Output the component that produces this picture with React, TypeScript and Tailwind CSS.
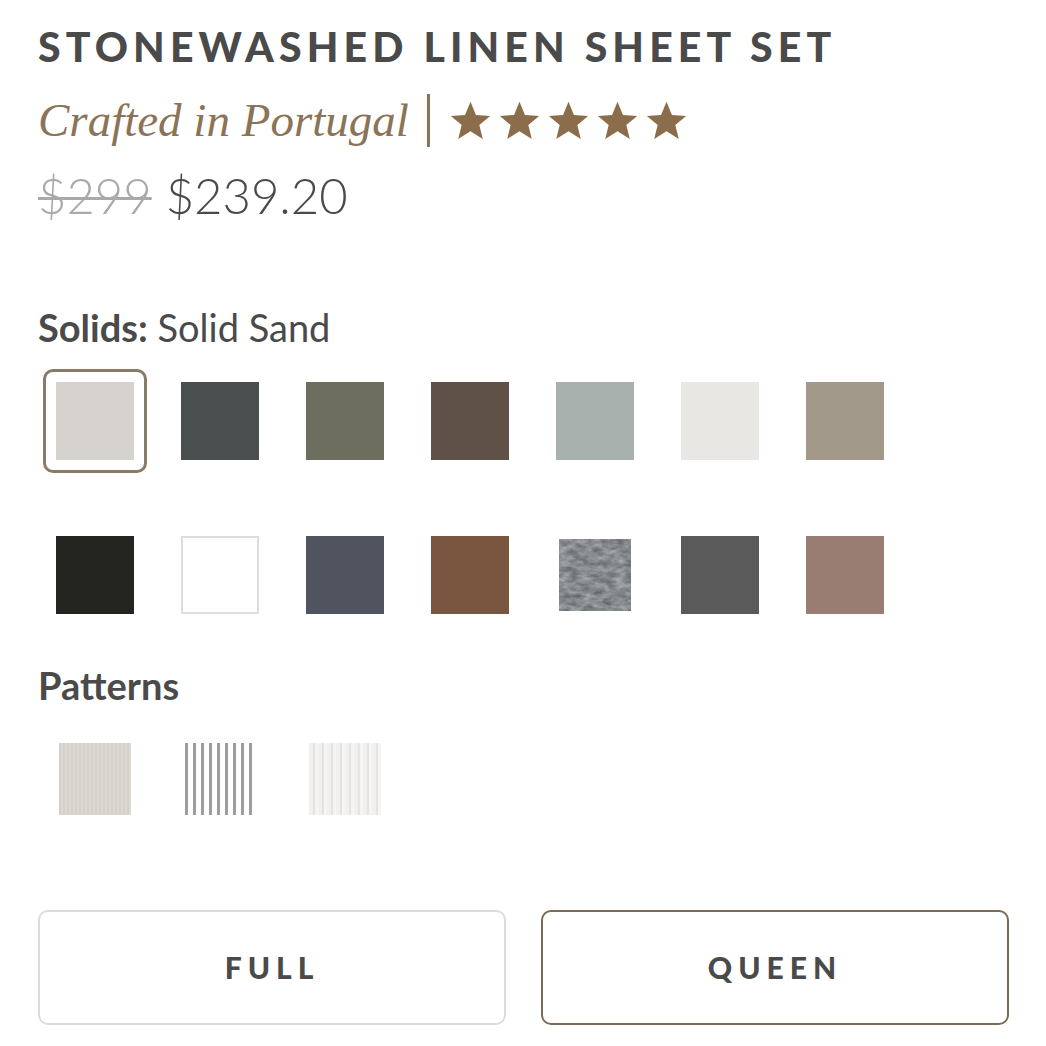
import React from "react";

const Star = () => (
  <svg width="41" height="39" viewBox="0 0 24 23" className="shrink-0">
    <path d="M12 0.5l3.2 7.7 8.4.6-6.4 5.4 2.05 8.2L12 17.9l-7.25 4.5 2.05-8.2L0.4 8.8l8.4-.6z" fill="#8b6d4b" />
  </svg>
);

const row1 = ["#d6d2cd", "#4a5050", "#6e6e5e", "#5f5048", "#a9b1af", "#e9e7e3", "#a3998a"];
const row2 = ["#23241f", "white", "#50545f", "#7a5540", "heather", "#5a5a5a", "#9a7d72"];

const Heather = () => (
  <svg width="72" height="72" viewBox="0 0 72 72">
    <filter id="noise" x="0" y="0" width="100%" height="100%" colorInterpolationFilters="sRGB">
      <feTurbulence type="fractalNoise" baseFrequency="0.09 0.18" numOctaves="4" seed="7" />
      <feColorMatrix
        type="matrix"
        values="0.45 0 0 0 0.3  0.45 0 0 0 0.315  0.45 0 0 0 0.33  0 0 0 0 1"
      />
    </filter>
    <rect width="72" height="72" filter="url(#noise)" />
  </svg>
);

function Swatch({ c, selected }: { c: string; selected?: boolean }) {
  let inner: React.ReactNode;
  if (c === "white") {
    inner = <div className="w-[78px] h-[78px] bg-white border-2 border-[#dddddd]" />;
  } else if (c === "heather") {
    inner = (
      <div className="w-[78px] h-[78px] flex items-center justify-center">
        <Heather />
      </div>
    );
  } else {
    inner = <div className="w-[78px] h-[78px]" style={{ backgroundColor: c }} />;
  }
  return (
    <div
      className={
        "w-[104px] h-[104px] flex items-center justify-center rounded-[10px] border-[3px] " +
        (selected ? "border-[#8a7a66]" : "border-transparent")
      }
    >
      {inner}
    </div>
  );
}

export default function App() {
  return (
    <div
      className="w-[1046px] h-[1046px] bg-white overflow-hidden pl-[38px] pt-[22px]"
      style={{ fontFamily: "Lato, 'Noto Sans', sans-serif" }}
    >
      <h1 className="text-[41px] leading-[50px] font-black tracking-[0.125em] text-[#4a4a4a] whitespace-nowrap">
        STONEWASHED LINEN SHEET SET
      </h1>
      <div className="flex items-center h-[60px] mt-[18px]">
        <span
          className="italic text-[47px] leading-[60px] text-[#8b7357]"
          style={{ fontFamily: "'Liberation Serif', serif" }}
        >
          Crafted in Portugal
        </span>
        <div className="w-[3px] h-[53px] bg-[#8b7357] ml-[18px] mr-[20px]" />
        <div className="flex gap-[8px]">
          <Star />
          <Star />
          <Star />
          <Star />
          <Star />
        </div>
      </div>
      <div className="flex items-baseline gap-[14px] mt-[15px] font-light text-[49px] leading-[60px]">
        <span className="text-[#a9a9a9] line-through decoration-[3px]">$299</span>
        <span className="text-[#4a4a4a]">$239.20</span>
      </div>
      <div className="mt-[80px] text-[38px] leading-[44px] text-[#4a4a4a]">
        <span className="font-bold">Solids:</span> <span className="font-normal">Solid Sand</span>
      </div>
      <div className="mt-[20px] -ml-[33px] flex flex-col gap-[50px]">
        <div className="flex gap-[21px] ml-[38px]">
          {row1.map((c, i) => (
            <Swatch key={i} c={c} selected={i === 0} />
          ))}
        </div>
        <div className="flex gap-[21px] ml-[38px]">
          {row2.map((c, i) => (
            <Swatch key={i} c={c} />
          ))}
        </div>
      </div>
      <div className="mt-[36px] text-[38px] leading-[44px] font-bold text-[#4a4a4a]">Patterns</div>
      <div className="mt-[36px] flex gap-[53px] ml-[21px]">
        <div className="w-[72px] h-[72px] bg-[#d6d1cb] bg-[repeating-linear-gradient(90deg,#d4cfc9_0px,#d4cfc9_2px,#dcd8d3_2px,#dcd8d3_4px)]" />
        <div className="w-[72px] h-[72px] bg-[repeating-linear-gradient(90deg,transparent_0px,transparent_1px,#9d9d9d_1px,#9d9d9d_4px,transparent_4px,transparent_8px)]" />
        <div className="w-[72px] h-[72px] bg-[#f1f0ee] bg-[repeating-linear-gradient(90deg,#f1f0ee_0px,#f1f0ee_4px,#e4e3e0_4px,#e4e3e0_6px,#f6f5f3_6px,#f6f5f3_9px)]" />
      </div>
      <div className="mt-[95px] flex gap-[35px] w-[971px]">
        <button className="flex-1 h-[115px] rounded-[10px] border-2 border-[#dcdcdc] bg-white text-[30px] font-black tracking-[0.2em] text-[#4a4a4a]">
          FULL
        </button>
        <button className="flex-1 h-[115px] rounded-[10px] border-2 border-[#7a6a58] bg-white text-[30px] font-black tracking-[0.2em] text-[#4a4a4a]">
          QUEEN
        </button>
      </div>
    </div>
  );
}
